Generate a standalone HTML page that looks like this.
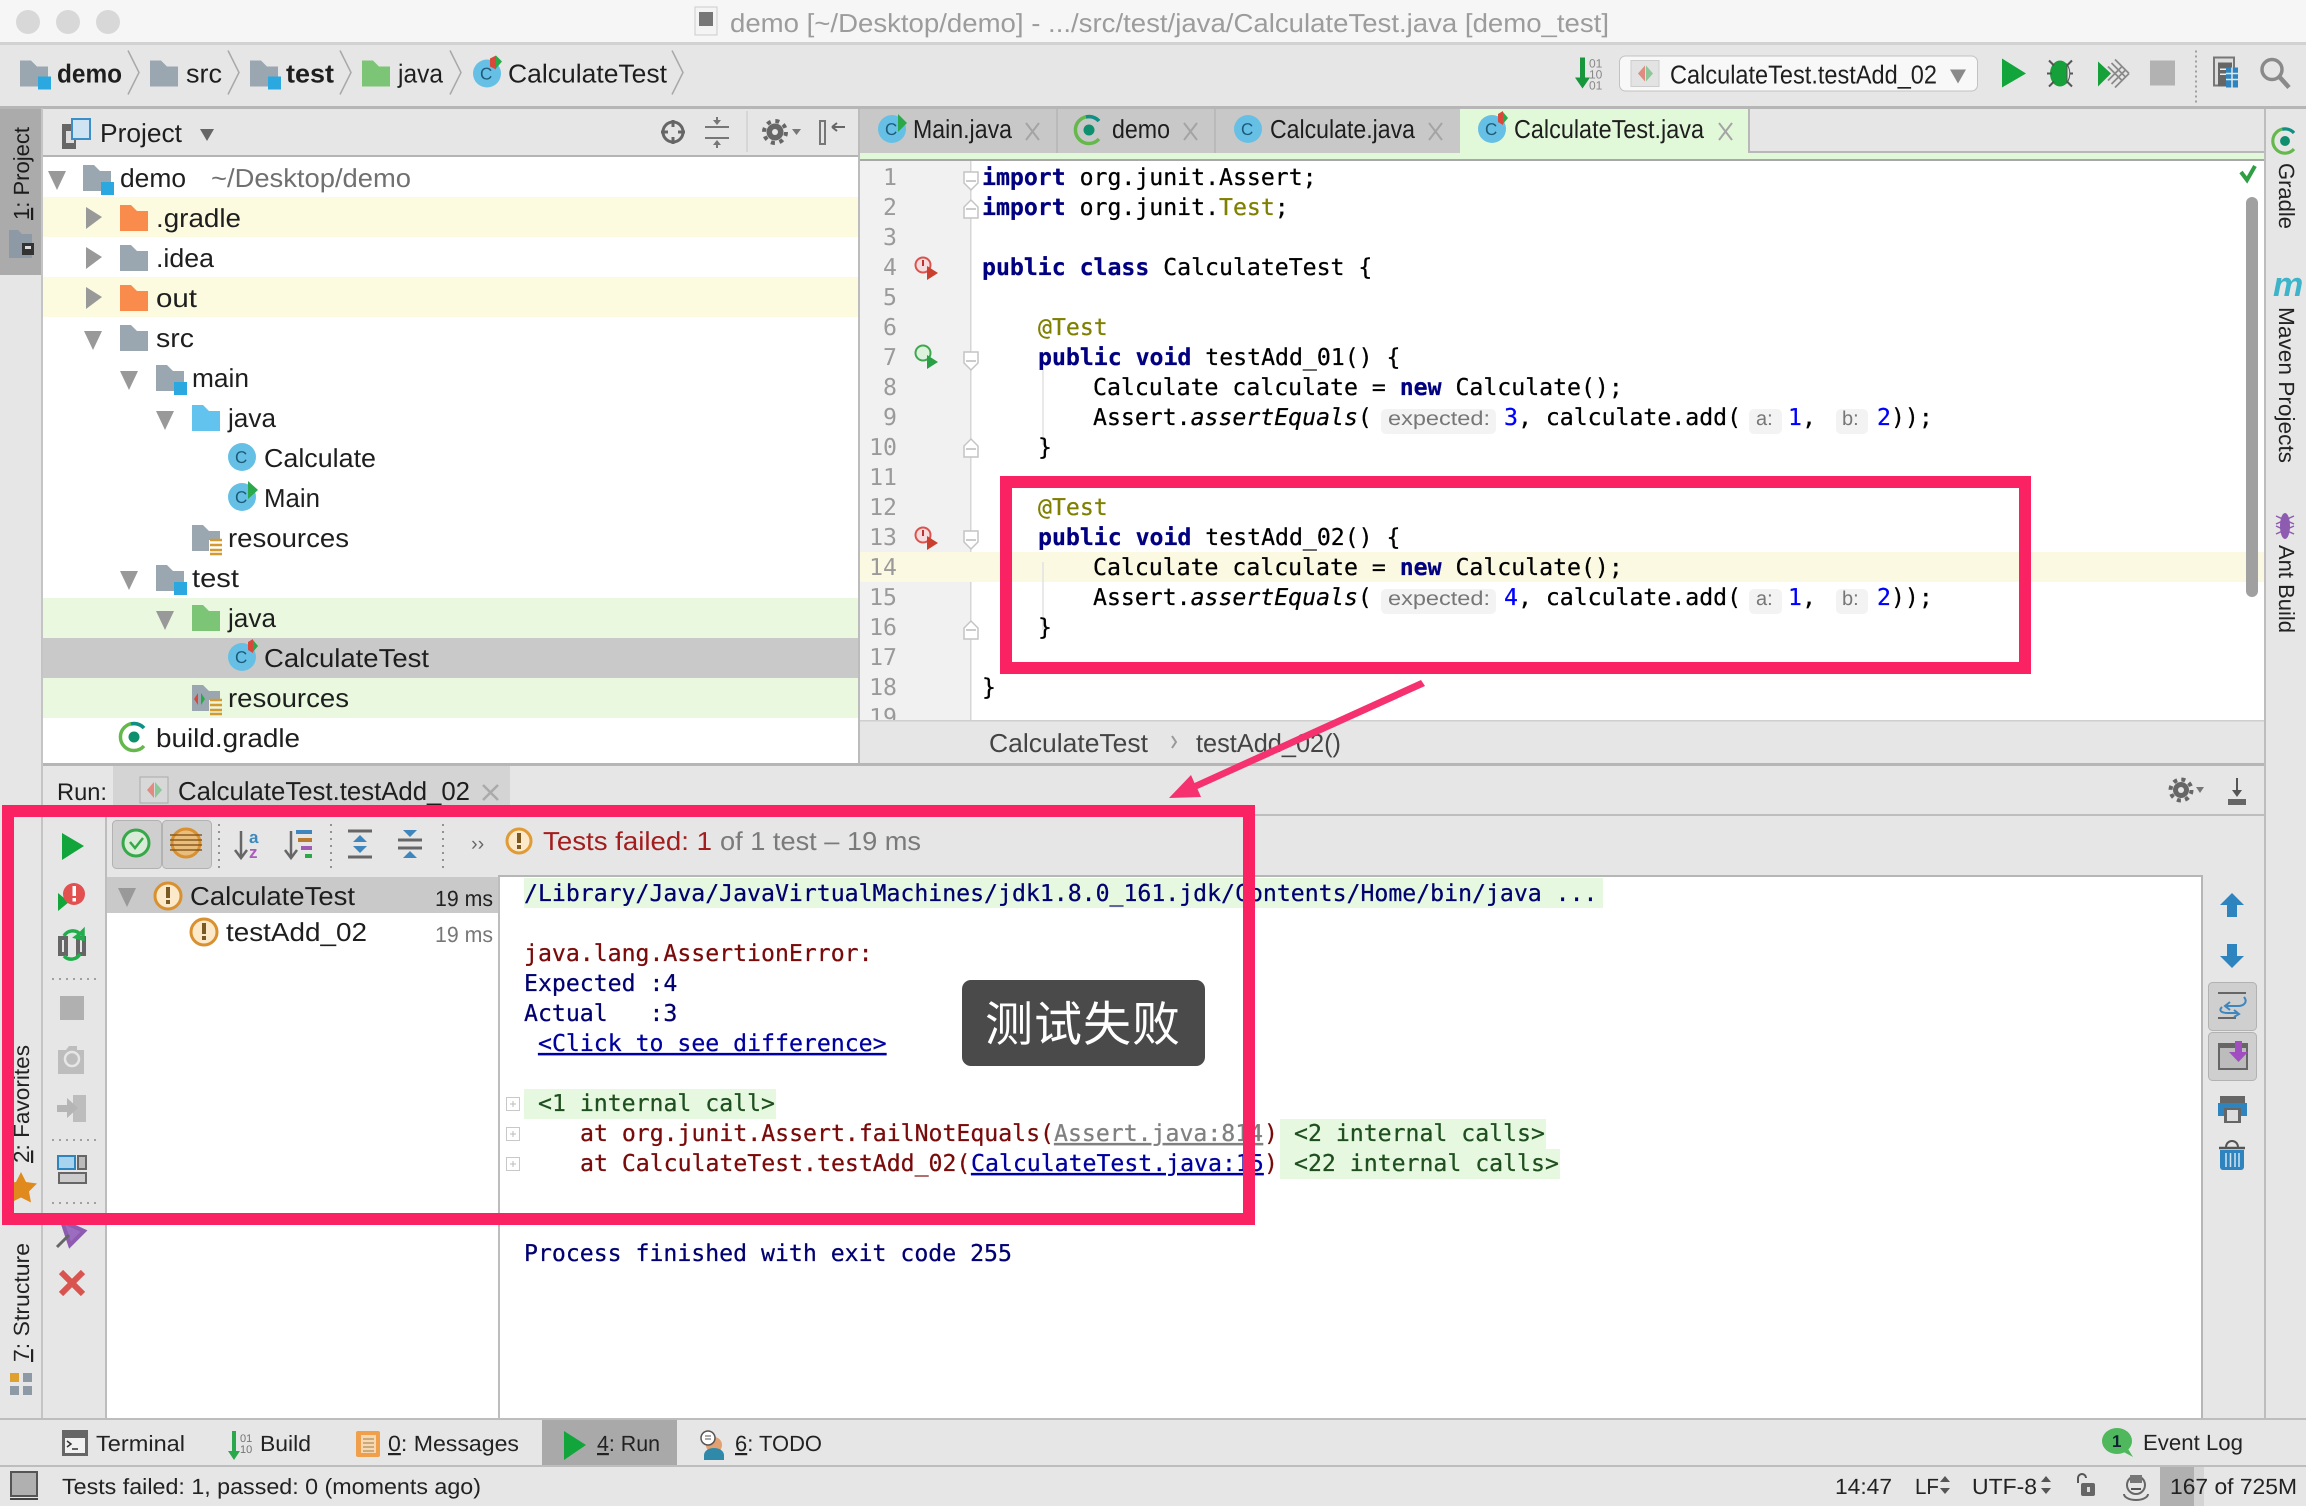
<!DOCTYPE html>
<html><head><meta charset="utf-8"><title>CalculateTest</title>
<style>
html,body{margin:0;padding:0;background:#e6e6e6;width:2306px;height:1506px;overflow:hidden}
svg{display:block;position:absolute;left:0;top:0}
text{font-family:"Liberation Sans","Noto Sans CJK SC",sans-serif;white-space:pre;text-rendering:geometricPrecision}
.u{font-size:26px;fill:#1e1e1e}
.m{font-family:"DejaVu Sans Mono","Liberation Mono",monospace;font-size:23.17px;fill:#000;stroke:#000;stroke-width:.25}
.k{font-weight:bold;fill:#000080;stroke:#000080}
.n{fill:#0000ff;stroke:#0000ff}
.a{fill:#808000;stroke:#808000}
.ln{font-family:"DejaVu Sans Mono","Liberation Mono",monospace;font-size:23.17px;fill:#9a9a9a;text-anchor:end}
.h{font-size:20px;fill:#777}
.red{fill:#7a0a0a;stroke:#7a0a0a}.nv{fill:#000070;stroke:#000070}.grn{fill:#1f4f1f;stroke:#1f4f1f}
.s{font-size:22px;fill:#222}
</style></head><body>
<svg width="2306" height="1506" viewBox="0 0 2306 1506" xmlns="http://www.w3.org/2000/svg">
<defs>
<path id="fo" d="M0 0H11L17 6H28V26H0Z"/>
<path id="fd" d="M0 0h14v11l-7 7-7-7z" fill="#fff" stroke="#c4c4c4" stroke-width="1.5"/>
<path id="fu" d="M7 0l7 7v11H0V7z" fill="#fff" stroke="#c4c4c4" stroke-width="1.5"/>
<path id="arr-d" d="M0 0H18L9 19Z" fill="#999"/>
<path id="arr-r" d="M0 0L16 10L0 22Z" fill="#999"/>
<g id="gr"><path d="M10-9A13.500 13.500 0 1 0 10 9" fill="none" stroke="#64b84c" stroke-width="3.500"/><path d="M10-9A13.500 13.500 0 0 0-3-13" fill="none" stroke="#0e8f88" stroke-width="3.500"/><circle r="5.500" fill="#0e8f6e"/></g>
</defs>

<!-- title bar -->
<rect width="2306" height="1506" fill="#e6e6e6"/>
<rect width="2306" height="42" fill="#f6f6f6"/>
<rect y="42" width="2306" height="3" fill="#d2d2d2"/>
<circle cx="28" cy="22" r="12" fill="#d8d8d8"/><circle cx="68" cy="22" r="12" fill="#d8d8d8"/><circle cx="108" cy="22" r="12" fill="#d8d8d8"/>
<rect x="695" y="7" width="22" height="28" fill="#f4f4f4" stroke="#ccc"/><rect x="699" y="12" width="14" height="14" fill="#777"/>
<text x="730" y="32" class="u" style="fill:#9c9c9c" font-size="26" textLength="879" lengthAdjust="spacingAndGlyphs">demo [~/Desktop/demo] - .../src/test/java/CalculateTest.java [demo_test]</text>

<!-- nav bar -->
<rect y="106" width="2306" height="3" fill="#b6b6b6"/>
<g transform="translate(0,-1.500)">
<use href="#fo" x="20" y="62" fill="#9aa7b0"/><rect x="38" y="78" width="13" height="13" fill="#2aa8df"/>
<text x="57" y="84" class="u" font-weight="bold" textLength="65" lengthAdjust="spacingAndGlyphs">demo</text>
<path d="M128 52L139 74L128 96" fill="none" stroke="#a8a8a8" stroke-width="1.5"/>
<use href="#fo" x="150" y="62" fill="#9aa7b0"/>
<text x="186" y="84" class="u" textLength="36" lengthAdjust="spacingAndGlyphs">src</text>
<path d="M228 52L239 74L228 96" fill="none" stroke="#a8a8a8" stroke-width="1.5"/>
<use href="#fo" x="250" y="62" fill="#9aa7b0"/><rect x="268" y="78" width="13" height="13" fill="#2aa8df"/>
<text x="286" y="84" class="u" font-weight="bold" textLength="48" lengthAdjust="spacingAndGlyphs">test</text>
<path d="M340 52L351 74L340 96" fill="none" stroke="#a8a8a8" stroke-width="1.5"/>
<use href="#fo" x="362" y="62" fill="#7cc576"/>
<text x="398" y="84" class="u" textLength="45" lengthAdjust="spacingAndGlyphs">java</text>
<path d="M450 52L461 74L450 96" fill="none" stroke="#a8a8a8" stroke-width="1.5"/>
<circle cx="487" cy="75" r="14" fill="#66c0e6"/><text x="480" y="81" font-size="17" fill="#1d5a78">C</text>
<path d="M490 60l6-3v14l-6-3z" fill="#d9483b"/><path d="M496 57l6 6-6 7z" fill="#2aa84a"/>
<text x="508" y="84" class="u" textLength="159" lengthAdjust="spacingAndGlyphs">CalculateTest</text>
<path d="M672 52L683 74L672 96" fill="none" stroke="#a8a8a8" stroke-width="1.5"/>

<!-- run config toolbar -->
<path d="M1580 59h5v20h5l-7.500 11-7.500-11h5z" fill="#17963c"/>
<text x="1589" y="69" font-size="12" fill="#888">01</text><text x="1589" y="80" font-size="12" fill="#888">10</text><text x="1589" y="91" font-size="12" fill="#888">01</text>
<rect x="1619.500" y="57.500" width="358" height="35" rx="6" fill="#f8f8f8" stroke="#c2c2c2"/>
<rect x="1631" y="62" width="28" height="26" fill="#e3e3e3" stroke="#ccc"/><path d="M1645 67v16l-7-8z" fill="#e08a80"/><path d="M1646 67v16l7-8z" fill="#8cc79a"/>
<text x="1670" y="85" class="u" textLength="267" lengthAdjust="spacingAndGlyphs">CalculateTest.testAdd_02</text>
<path d="M1950 71h16l-8 14z" fill="#8a8a8a"/>
<path d="M2002 60L2026 75L2002 89Z" fill="#12a53b"/>
<ellipse cx="2060" cy="75" rx="10" ry="13" fill="#16a03a"/><path d="M2049 62l5 5M2072 62l-5 5M2047 75h5M2073 75h-5M2049 88l5-5M2072 88l-5-5" stroke="#555" stroke-width="2"/><path d="M2067 66a10 13 0 0 1 0 18z" fill="#e6e6e6" stroke="#555" stroke-width="1"/>
<path d="M2098 63l13 12-13 13z" fill="#16a03a"/><path d="M2108 68l14 14M2111.500 64.500l14 14M2115 61l14 14M2108 82l14-14M2111.500 85.500l14-14M2115 89l14-14" stroke="#8a8a8a" stroke-width="1.800"/>
<rect x="2150" y="62" width="25" height="25" fill="#b2b2b2"/>
<path d="M2196 52V104" stroke="#888" stroke-width="1.500" stroke-dasharray="2 3"/>
<rect x="2214" y="59" width="20" height="28" fill="#ddd" stroke="#777" stroke-width="2"/><rect x="2218" y="64" width="14" height="24" fill="#666"/><rect x="2220" y="70" width="8" height="1.500" fill="#eee"/><rect x="2220" y="75" width="8" height="1.500" fill="#eee"/>
<rect x="2226" y="69" width="12" height="20" fill="#2e84bf" /><path d="M2226 75h12M2226 81h12M2232 69v20" stroke="#e6e6e6" stroke-width="1.500"/>
<circle cx="2272" cy="71" r="10" fill="none" stroke="#8a8a8a" stroke-width="3.500"/><path d="M2280 79l9 10" stroke="#8a8a8a" stroke-width="4.500"/>
</g>

<!-- left stripe -->
<rect x="41" y="108" width="2" height="1310" fill="#c4c4c4"/>
<rect x="0" y="109" width="41" height="166" fill="#ababab"/>
<g transform="translate(29,220) rotate(-90)"><text class="s" textLength="93" lengthAdjust="spacingAndGlyphs" style="fill:#1c1c1c"><tspan text-decoration="underline">1</tspan>: Project</text></g>
<path d="M9 230H18L22 234H32V258H9Z" fill="#8d9aa5"/><rect x="22" y="243" width="12" height="12" fill="#333"/><rect x="25" y="246" width="6" height="3" fill="#ddd"/>
<g transform="translate(29,1163) rotate(-90)"><text class="s" textLength="118" lengthAdjust="spacingAndGlyphs"><tspan text-decoration="underline">2</tspan>: Favorites</text></g>
<path d="M21 1172l5 10 11 1.500-8 8 2 11-10-5-10 5 2-11-8-8 11-1.500z" fill="#e08a1e"/>
<g transform="translate(29,1362) rotate(-90)"><text class="s" textLength="119" lengthAdjust="spacingAndGlyphs"><tspan text-decoration="underline">7</tspan>: Structure</text></g>
<rect x="10" y="1373" width="9" height="9" fill="#e0a030"/><rect x="23" y="1373" width="9" height="9" fill="#8d9aa5"/><rect x="10" y="1386" width="9" height="9" fill="#8d9aa5"/><rect x="23" y="1386" width="9" height="9" fill="#8d9aa5"/>

<!-- project panel -->
<rect x="43" y="109" width="815" height="47" fill="#e6e6e6"/>
<rect x="43" y="155" width="815" height="2" fill="#b4b4b4"/>
<rect x="43" y="157" width="815" height="606" fill="#fff"/>
<rect x="858" y="109" width="2" height="656" fill="#bcbcbc"/>
<g transform="translate(0,-1)">
<rect x="62" y="125" width="14" height="25" fill="#666"/><rect x="66" y="132" width="8" height="12" fill="#ddd"/><rect x="72" y="120" width="18" height="20" fill="#cfe4f3" stroke="#3b8ec7" stroke-width="2"/>
<text x="100" y="143" class="u" textLength="82" lengthAdjust="spacingAndGlyphs">Project</text>
<path d="M200 130h14l-7 12z" fill="#666"/>
<circle cx="673" cy="133" r="10" fill="none" stroke="#666" stroke-width="3"/><path d="M673 121v7M673 138v7M661 133h7M678 133h7" stroke="#666" stroke-width="3"/>
<path d="M705 128h24M705 139h24M717 118v7M717 142v7" stroke="#777" stroke-width="2"/><path d="M713 121l4 5 4-5zM713 146l4-5 4 5z" fill="#777"/>
<path d="M747 112V153" stroke="#d0d0d0" stroke-width="1.500"/>
<circle cx="775" cy="133" r="8.500" fill="#666"/><circle cx="775" cy="133" r="11" fill="none" stroke="#666" stroke-width="4" stroke-dasharray="4 4.640"/><circle cx="775" cy="133" r="3" fill="#e6e6e6"/><path d="M792 130h9l-4.500 6z" fill="#777"/>
<rect x="820" y="122" width="5" height="23" fill="none" stroke="#777" stroke-width="2"/><path d="M845 128h-13M832 128l5-4M832 128l5 4" stroke="#666" stroke-width="2" fill="none"/>
</g>

<!-- tree rows -->
<rect x="43" y="197" width="815" height="40" fill="#fcfbdf"/>
<rect x="43" y="277" width="815" height="40" fill="#fcfbdf"/>
<rect x="43" y="598" width="815" height="40" fill="#e9f8df"/>
<rect x="43" y="638" width="815" height="40" fill="#c9c9c9"/>
<rect x="43" y="678" width="815" height="40" fill="#e9f8df"/>

<g transform="translate(0,-1)">
<use href="#arr-d" x="48" y="172"/><use href="#fo" x="83" y="166" fill="#9aa7b0"/><rect x="101" y="183" width="13" height="13" fill="#2aa8df"/>
<text x="120" y="188" class="u" textLength="66" lengthAdjust="spacingAndGlyphs">demo</text>
<text x="211" y="188" class="u" style="fill:#707070" textLength="200" lengthAdjust="spacingAndGlyphs">~/Desktop/demo</text>

<use href="#arr-r" x="86" y="208"/><use href="#fo" x="120" y="206" fill="#f98b4d"/>
<text x="156" y="228" class="u" textLength="85" lengthAdjust="spacingAndGlyphs">.gradle</text>
<use href="#arr-r" x="86" y="248"/><use href="#fo" x="120" y="246" fill="#9aa7b0"/>
<text x="156" y="268" class="u" textLength="58" lengthAdjust="spacingAndGlyphs">.idea</text>
<use href="#arr-r" x="86" y="288"/><use href="#fo" x="120" y="286" fill="#f98b4d"/>
<text x="156" y="308" class="u" textLength="41" lengthAdjust="spacingAndGlyphs">out</text>
<use href="#arr-d" x="84" y="332"/><use href="#fo" x="120" y="326" fill="#9aa7b0"/>
<text x="156" y="348" class="u" textLength="38" lengthAdjust="spacingAndGlyphs">src</text>
<use href="#arr-d" x="120" y="372"/><use href="#fo" x="156" y="366" fill="#9aa7b0"/><rect x="174" y="383" width="13" height="13" fill="#2aa8df"/>
<text x="192" y="388" class="u" textLength="57" lengthAdjust="spacingAndGlyphs">main</text>
<use href="#arr-d" x="156" y="412"/><use href="#fo" x="192" y="406" fill="#62c4ee"/>
<text x="228" y="428" class="u" textLength="48" lengthAdjust="spacingAndGlyphs">java</text>

<circle cx="242" cy="458" r="14" fill="#66c0e6"/><text x="235" y="464" font-size="17" fill="#1d5a78">C</text>
<text x="264" y="468" class="u" textLength="112" lengthAdjust="spacingAndGlyphs">Calculate</text>
<circle cx="242" cy="498" r="14" fill="#66c0e6"/><text x="235" y="504" font-size="17" fill="#1d5a78">C</text><path d="M248 482l10 9-10 9z" fill="#2aa84a"/>
<text x="264" y="508" class="u" textLength="56" lengthAdjust="spacingAndGlyphs">Main</text>

<use href="#fo" x="192" y="526" fill="#9aa7b0"/><path d="M209 541h13v14h-13z" fill="#fff"/><path d="M210 541h12M210 546h12M210 551h12M210 555h12" stroke="#d49a30" stroke-width="2.500"/>
<text x="228" y="548" class="u" textLength="121" lengthAdjust="spacingAndGlyphs">resources</text>

<use href="#arr-d" x="120" y="572"/><use href="#fo" x="156" y="566" fill="#9aa7b0"/><rect x="174" y="583" width="13" height="13" fill="#2aa8df"/>
<text x="192" y="588" class="u" textLength="47" lengthAdjust="spacingAndGlyphs">test</text>
<use href="#arr-d" x="156" y="612"/><use href="#fo" x="192" y="606" fill="#7cc576"/>
<text x="228" y="628" class="u" textLength="48" lengthAdjust="spacingAndGlyphs">java</text>
<circle cx="242" cy="658" r="14" fill="#66c0e6"/><text x="235" y="664" font-size="17" fill="#1d5a78">C</text><path d="M248 643l5-3v14l-5-3z" fill="#d9483b"/><path d="M253 641l5 6-5 6z" fill="#2aa84a"/>
<text x="264" y="668" class="u" textLength="165" lengthAdjust="spacingAndGlyphs">CalculateTest</text>
<use href="#fo" x="192" y="686" fill="#9aa7b0"/><path d="M198 694l-4 6 4 6z" fill="#d9483b"/><path d="M201 694l4 6-4 6z" fill="#2aa84a"/><path d="M209 701h13v14h-13z" fill="#e9f8df"/><path d="M210 701h12M210 706h12M210 711h12M210 715h12" stroke="#d49a30" stroke-width="2.500"/>
<text x="228" y="708" class="u" textLength="121" lengthAdjust="spacingAndGlyphs">resources</text>
<use href="#gr" x="134" y="738"/>
<text x="156" y="748" class="u" textLength="144" lengthAdjust="spacingAndGlyphs">build.gradle</text>
</g>

<!-- tabs -->
<rect x="860" y="109" width="1406" height="44" fill="#e6e6e6"/>
<rect x="860" y="109" width="600" height="44" fill="#c8c8c8"/>
<path d="M1057 109v44M1215 109v44" stroke="#b6b6b6" stroke-width="1.500"/>
<rect x="1460" y="109" width="288" height="44" fill="#e1f9d8"/>
<rect x="1748" y="109" width="2" height="43" fill="#b8b8b8"/>
<rect x="1748" y="151" width="518" height="2" fill="#b8b8b8"/>
<rect x="860" y="153" width="1406" height="6" fill="#e1f9d8"/>
<rect x="860" y="159" width="1406" height="2" fill="#a8a8a8"/>
<circle cx="892" cy="129" r="14" fill="#66c0e6"/><text x="885" y="135" font-size="17" fill="#1d5a78">C</text><path d="M898 114l9 9-9 9z" fill="#2aa84a"/>
<text x="913" y="138" class="u" textLength="99" lengthAdjust="spacingAndGlyphs">Main.java</text>
<path d="M1026 123l13 17M1039 123l-13 17" stroke="#a4a4a4" stroke-width="2"/>
<use href="#gr" x="1089" y="130"/>
<text x="1112" y="138" class="u" textLength="58" lengthAdjust="spacingAndGlyphs">demo</text>
<path d="M1184 123l13 17M1197 123l-13 17" stroke="#a4a4a4" stroke-width="2"/>
<circle cx="1248" cy="129" r="14" fill="#66c0e6"/><text x="1241" y="135" font-size="17" fill="#1d5a78">C</text>
<text x="1270" y="138" class="u" textLength="145" lengthAdjust="spacingAndGlyphs">Calculate.java</text>
<path d="M1429 123l13 17M1442 123l-13 17" stroke="#a4a4a4" stroke-width="2"/>
<circle cx="1492" cy="129" r="14" fill="#66c0e6"/><text x="1485" y="135" font-size="17" fill="#1d5a78">C</text><path d="M1498 114l5-3v14l-5-3z" fill="#d9483b"/><path d="M1503 112l5 6-5 6z" fill="#2aa84a"/>
<text x="1514" y="138" class="u" textLength="190" lengthAdjust="spacingAndGlyphs">CalculateTest.java</text>
<path d="M1719 123l13 17M1732 123l-13 17" stroke="#a4a4a4" stroke-width="2"/>

<!-- editor -->
<rect x="860" y="161" width="110" height="560" fill="#f1f1f1"/>
<rect x="970" y="161" width="1296" height="560" fill="#fff"/>
<rect x="970" y="161" width="1.500" height="560" fill="#d6d6d6"/>
<rect x="860" y="552" width="1405" height="30" fill="#fcf9e3"/>
<path d="M1043 370V445M1043 562V630" stroke="#e2e2e2" stroke-width="1.500"/>

<g transform="translate(0,-1)">
<text class="ln" x="897" y="186">1</text><text class="ln" x="897" y="216">2</text><text class="ln" x="897" y="246">3</text><text class="ln" x="897" y="276">4</text><text class="ln" x="897" y="306">5</text><text class="ln" x="897" y="336">6</text><text class="ln" x="897" y="366">7</text><text class="ln" x="897" y="396">8</text><text class="ln" x="897" y="426">9</text><text class="ln" x="897" y="456">10</text><text class="ln" x="897" y="486">11</text><text class="ln" x="897" y="516">12</text><text class="ln" x="897" y="546">13</text><text class="ln" x="897" y="576">14</text><text class="ln" x="897" y="606">15</text><text class="ln" x="897" y="636">16</text><text class="ln" x="897" y="666">17</text><text class="ln" x="897" y="696">18</text><text class="ln" x="897" y="726">19</text>
</g>

<use href="#fd" x="964" y="172"/><use href="#fu" x="964" y="200"/><use href="#fd" x="964" y="352"/><use href="#fu" x="964" y="439"/><use href="#fd" x="964" y="531"/><use href="#fu" x="964" y="621"/>
<path d="M966 181h10M966 209h10M966 361h10M966 449h10M966 540h10M966 630h10" stroke="#bbb" stroke-width="1.500"/>

<!-- gutter icons -->
<circle cx="923" cy="265" r="7.500" fill="#f6dcdc" stroke="#d9534f" stroke-width="2"/><path d="M923 260v6" stroke="#b33" stroke-width="2"/><path d="M927 266l11 7-11 7z" fill="#c9402f"/>
<circle cx="923" cy="353" r="7.500" fill="#dcf2dc" stroke="#3fa84f" stroke-width="2"/><path d="M927 355l11 7-11 7z" fill="#29a045"/>
<circle cx="923" cy="535" r="7.500" fill="#f6dcdc" stroke="#d9534f" stroke-width="2"/><path d="M923 530v6" stroke="#b33" stroke-width="2"/><path d="M927 536l11 7-11 7z" fill="#c9402f"/>

<!-- code -->
<g transform="translate(0,-1)">
<text class="m" x="982" y="186"><tspan class="k">import</tspan> org.junit.Assert;</text>
<text class="m" x="982" y="216"><tspan class="k">import</tspan> org.junit.<tspan class="a">Test</tspan>;</text>
<text class="m" x="982" y="276"><tspan class="k">public class</tspan> CalculateTest {</text>
<text class="m" x="1038" y="336"><tspan class="a">@Test</tspan></text>
<text class="m" x="1038" y="366"><tspan class="k">public void</tspan> testAdd_01() {</text>
<text class="m" x="1093" y="396">Calculate calculate = <tspan class="k">new</tspan> Calculate();</text>
<text class="m" x="1093" y="426">Assert.<tspan font-style="italic">assertEquals</tspan>(</text>
<rect x="1381" y="410" width="115" height="25" rx="5" fill="#f3f3f3"/><text class="h" x="1388" y="426" textLength="102" lengthAdjust="spacingAndGlyphs">expected:</text>
<text class="m" x="1504" y="426"><tspan class="n">3</tspan>, calculate.add(</text>
<rect x="1749" y="410" width="33" height="25" rx="5" fill="#f3f3f3"/><text class="h" x="1756" y="426">a:</text>
<text class="m" x="1788" y="426"><tspan class="n">1</tspan>,</text>
<rect x="1836" y="410" width="32" height="25" rx="5" fill="#f3f3f3"/><text class="h" x="1842" y="426">b:</text>
<text class="m" x="1877" y="426"><tspan class="n">2</tspan>));</text>
<text class="m" x="1038" y="456">}</text>

<text class="m" x="1038" y="516"><tspan class="a">@Test</tspan></text>
<text class="m" x="1038" y="546"><tspan class="k">public void</tspan> testAdd_02() {</text>
<text class="m" x="1093" y="576">Calculate calculate = <tspan class="k">new</tspan> Calculate();</text>
<text class="m" x="1093" y="606">Assert.<tspan font-style="italic">assertEquals</tspan>(</text>
<rect x="1381" y="590" width="115" height="25" rx="5" fill="#f3f3f3"/><text class="h" x="1388" y="606" textLength="102" lengthAdjust="spacingAndGlyphs">expected:</text>
<text class="m" x="1504" y="606"><tspan class="n">4</tspan>, calculate.add(</text>
<rect x="1749" y="590" width="33" height="25" rx="5" fill="#f3f3f3"/><text class="h" x="1756" y="606">a:</text>
<text class="m" x="1788" y="606"><tspan class="n">1</tspan>,</text>
<rect x="1836" y="590" width="32" height="25" rx="5" fill="#f3f3f3"/><text class="h" x="1842" y="606">b:</text>
<text class="m" x="1877" y="606"><tspan class="n">2</tspan>));</text>
<text class="m" x="1038" y="636">}</text>
<text class="m" x="982" y="696">}</text>
</g>

<!-- scrollbar & check -->
<rect x="2246" y="197" width="12" height="400" rx="6" fill="#a0a0a0"/>
<path d="M2241 172l6 8 8-14" fill="none" stroke="#2f9e44" stroke-width="4"/>

<!-- right stripe -->
<rect x="2264" y="109" width="2" height="1309" fill="#bdbdbd"/>
<use href="#gr" transform="translate(2285,141) scale(.9)"/>
<g transform="translate(2279,163) rotate(90)"><text class="s" textLength="66" lengthAdjust="spacingAndGlyphs">Gradle</text></g>
<text x="2273" y="296" font-size="34" font-style="italic" font-weight="bold" fill="#3db4c9" font-family="Liberation Serif">m</text>
<g transform="translate(2279,307) rotate(90)"><text class="s" textLength="156" lengthAdjust="spacingAndGlyphs">Maven Projects</text></g>
<ellipse cx="2285" cy="526" rx="5" ry="13" fill="#8d5cb0"/><path d="M2276 516l18 8M2294 516l-18 8M2276 534l18-8M2294 534l-18-8" stroke="#8d5cb0" stroke-width="1.500"/>
<g transform="translate(2279,545) rotate(90)"><text class="s" textLength="88" lengthAdjust="spacingAndGlyphs">Ant Build</text></g>

<!-- editor breadcrumb -->
<rect x="860" y="721" width="1404" height="43" fill="#e6e6e6"/>
<rect x="860" y="720" width="1404" height="1.500" fill="#cfcfcf"/>
<text x="989" y="752" class="u" style="fill:#444" font-size="25" textLength="159" lengthAdjust="spacingAndGlyphs">CalculateTest</text>
<path d="M1172 736l4 6-4 6" fill="none" stroke="#999" stroke-width="2"/>
<text x="1196" y="752" class="u" style="fill:#444" textLength="145" lengthAdjust="spacingAndGlyphs">testAdd_02()</text>

<!-- run panel header -->
<rect x="43" y="763" width="2221" height="3" fill="#b6b6b6"/>
<rect x="43" y="766" width="2221" height="652" fill="#e6e6e6"/>
<rect x="113" y="766" width="397" height="49" fill="#d4d4d4"/>
<rect x="43" y="814" width="2221" height="2" fill="#bdbdbd"/>
<text x="57" y="800" class="u" style="font-size:24px" textLength="50" lengthAdjust="spacingAndGlyphs">Run:</text>
<rect x="140" y="777" width="28" height="26" fill="#d8d8d8" stroke="#aaa"/><path d="M154 782v16l-7-8z" fill="#e08a80"/><path d="M155 782v16l7-8z" fill="#8cc79a"/>
<text x="178" y="800" class="u" textLength="292" lengthAdjust="spacingAndGlyphs">CalculateTest.testAdd_02</text>
<path d="M483 785l15 15M498 785l-15 15" stroke="#aaa" stroke-width="2.500"/>
<circle cx="2181" cy="790" r="8" fill="#666"/><circle cx="2181" cy="790" r="10.500" fill="none" stroke="#666" stroke-width="4" stroke-dasharray="4 4.250"/><circle cx="2181" cy="790" r="3" fill="#e6e6e6"/><path d="M2196 787h8l-4 6z" fill="#777"/>
<path d="M2237 778v16" stroke="#555" stroke-width="2"/><path d="M2232 790l5 7 5-7z" fill="#555"/><path d="M2228 799h18v6h-18z" fill="#666"/>

<!-- run left toolbar -->
<rect x="105" y="816" width="2" height="602" fill="#bdbdbd"/>
<path d="M62 833L84 846L62 860Z" fill="#12a53b"/>
<path d="M58 893l11 9-11 9z" fill="#12a53b"/><circle cx="74" cy="894" r="11" fill="#e25050"/><rect x="72.500" y="886" width="3.500" height="10" fill="#fff"/><rect x="72.500" y="898" width="3.500" height="3.500" fill="#fff"/>
<path d="M60 938h6v16h-6zM78 938h6v16h-6z" fill="none" stroke="#666" stroke-width="4"/><path d="M64 936a10 10 0 0 1 16-2l-4 3 7 2v-8l-3 3M80 954a10 10 0 0 1-16 2" fill="none" stroke="#1fae4a" stroke-width="3.500"/>
<path d="M52 979h46" stroke="#888" stroke-width="1.500" stroke-dasharray="2 5"/>
<rect x="60" y="996" width="24" height="24" fill="#b0b0b0"/>
<path d="M58 1050h8l3-4h8v4h7v24H58z" fill="#bdbdbd"/><circle cx="72" cy="1059" r="7" fill="none" stroke="#e6e6e6" stroke-width="2.500"/>
<rect x="73" y="1095" width="13" height="27" fill="#bdbdbd"/><path d="M57 1105h10v-7l11 10-11 10v-6H57z" fill="#b5b5b5"/>
<path d="M52 1140h46" stroke="#888" stroke-width="1.500" stroke-dasharray="2 5"/>
<rect x="58" y="1156" width="17" height="13" fill="#a7d3ee" stroke="#2e84bf" stroke-width="2"/><rect x="78" y="1156" width="8" height="13" fill="#bbb" stroke="#666" stroke-width="2"/><rect x="59" y="1173" width="27" height="10" fill="#ccc" stroke="#666" stroke-width="2"/>
<path d="M52 1203h46" stroke="#888" stroke-width="1.500" stroke-dasharray="2 5"/>
<path d="M62 1221l22 10-14 14z" stroke="#8d5cb0" stroke-width="4" fill="#9b6cc0"/><path d="M57 1247l12-12" stroke="#666" stroke-width="3"/>
<path d="M61 1272l22 22M83 1272l-22 22" stroke="#d9534f" stroke-width="6"/>

<!-- run toolbar -->
<rect x="112.500" y="820.500" width="49" height="48" rx="4" fill="#cfcfcf" stroke="#b2b2b2"/>
<rect x="162.500" y="820.500" width="49" height="48" rx="4" fill="#cfcfcf" stroke="#b2b2b2"/>
<circle cx="136" cy="843" r="13" fill="#d8ecd8" stroke="#37a84a" stroke-width="3"/><path d="M130 842l5 6 8-10" fill="none" stroke="#37a84a" stroke-width="2.500"/>
<circle cx="186" cy="843" r="14" fill="#e9bd7c" stroke="#d89030" stroke-width="3"/><path d="M170 835h32M170 840h32M170 845h32M170 850h32" stroke="#8a5a20" stroke-width="1.500"/>
<path d="M219 824v46M331 824v46M443 824v46" stroke="#777" stroke-width="1.500" stroke-dasharray="2 5"/>
<path d="M241 831v26" stroke="#666" stroke-width="2.500"/><path d="M235 850l6 8 6-8" fill="none" stroke="#666" stroke-width="2.500"/>
<text x="249" y="843" font-size="17" font-weight="bold" fill="#3d88bd">a</text><text x="249" y="858" font-size="17" font-weight="bold" fill="#a95cbb">z</text>
<path d="M291 831v26" stroke="#666" stroke-width="2.500"/><path d="M285 850l6 8 6-8" fill="none" stroke="#666" stroke-width="2.500"/>
<path d="M296 832h16" stroke="#3f86bd" stroke-width="4"/><path d="M298 840h14" stroke="#b97b30" stroke-width="4"/><path d="M301 848h11" stroke="#a05cb5" stroke-width="4"/><path d="M305 856h7" stroke="#2aa84a" stroke-width="4"/>
<path d="M348 831h24M348 857h24" stroke="#666" stroke-width="3"/><path d="M360 835l7 7h-14zM360 853l7-7h-14z" fill="#3f86bd"/>
<path d="M398 840h24M398 848h24" stroke="#666" stroke-width="3"/><path d="M403 830h14l-7 7zM403 858h14l-7-7z" fill="#3f86bd"/>
<text x="471" y="850" font-size="20" fill="#666">››</text>
<circle cx="519" cy="841" r="12" fill="#fce9c9" stroke="#e09a36" stroke-width="3"/><rect x="517" y="833" width="4" height="10" fill="#7a5a22"/><rect x="517" y="845" width="4" height="4" fill="#7a5a22"/>
<text x="543" y="850" font-size="26" fill="#a31d1d" textLength="169" lengthAdjust="spacingAndGlyphs">Tests failed: 1</text>
<text x="720" y="850" font-size="26" fill="#7a7a7a" textLength="201" lengthAdjust="spacingAndGlyphs">of 1 test – 19 ms</text>

<!-- test tree -->
<rect x="107" y="877" width="391" height="336" fill="#fff"/><rect x="107" y="1213" width="391" height="205" fill="#fff"/>
<rect x="107" y="877" width="391" height="36" fill="#c9c9c9"/>
<use href="#arr-d" x="118" y="888"/>
<circle cx="168" cy="896" r="13" fill="#fce9c9" stroke="#d89030" stroke-width="3"/><rect x="166" y="887" width="4" height="11" fill="#7a5a22"/><rect x="166" y="900" width="4" height="4" fill="#7a5a22"/>
<text x="190" y="905" class="u" textLength="165" lengthAdjust="spacingAndGlyphs">CalculateTest</text>
<text x="435" y="906" font-size="22" fill="#222" textLength="58" lengthAdjust="spacingAndGlyphs">19 ms</text>
<circle cx="204" cy="932" r="13" fill="#fce9c9" stroke="#d89030" stroke-width="3"/><rect x="202" y="923" width="4" height="11" fill="#7a5a22"/><rect x="202" y="936" width="4" height="4" fill="#7a5a22"/>
<text x="226" y="941" class="u" textLength="141" lengthAdjust="spacingAndGlyphs">testAdd_02</text>
<text x="435" y="942" font-size="22" fill="#777" textLength="58" lengthAdjust="spacingAndGlyphs">19 ms</text>

<!-- console -->
<rect x="498" y="877" width="2" height="541" fill="#bdbdbd"/>
<rect x="500" y="877" width="1701" height="541" fill="#fff"/>
<rect x="2201" y="877" width="2" height="541" fill="#b6b6b6"/>
<rect x="498" y="875" width="1705" height="2" fill="#b6b6b6"/>
<rect x="524" y="878" width="1079" height="30" fill="#e6f9e0"/>
<text class="m nv" x="524" y="901">/Library/Java/JavaVirtualMachines/jdk1.8.0_161.jdk/Contents/Home/bin/java ...</text>
<text class="m red" x="524" y="961">java.lang.AssertionError:</text>
<text class="m nv" x="524" y="991">Expected :4</text>
<text class="m nv" x="524" y="1021">Actual   :3</text>
<text class="m" x="538" y="1051" style="fill:#0000a0;stroke:#0000a0" text-decoration="underline">&lt;Click to see difference&gt;</text>
<rect x="524" y="1089" width="252" height="30" fill="#e6f9e0"/>
<text class="m grn" x="538" y="1111">&lt;1 internal call&gt;</text>
<text class="m red" x="580" y="1141">at org.junit.Assert.failNotEquals(</text>
<text class="m" x="1054" y="1141" style="fill:#808080;stroke:#808080" text-decoration="underline">Assert.java:814</text>
<text class="m red" x="1264" y="1141">)</text>
<rect x="1280" y="1119" width="266" height="30" fill="#e6f9e0"/>
<text class="m grn" x="1294" y="1141">&lt;2 internal calls&gt;</text>
<text class="m red" x="580" y="1171">at CalculateTest.testAdd_02(</text>
<text class="m" x="971" y="1171" style="fill:#0000a0;stroke:#0000a0" text-decoration="underline">CalculateTest.java:15</text>
<text class="m red" x="1264" y="1171">)</text>
<rect x="1280" y="1149" width="280" height="30" fill="#e6f9e0"/>
<text class="m grn" x="1294" y="1171">&lt;22 internal calls&gt;</text>
<text class="m nv" x="524" y="1261">Process finished with exit code 255</text>
<path d="M506.500 1097.500h13v13h-13zM506.500 1127.500h13v13h-13zM506.500 1157.500h13v13h-13z" fill="#fff" stroke="#c8c8c8"/>
<path d="M510 1104h6M513 1101v6M510 1134h6M513 1131v6M510 1164h6M513 1161v6" stroke="#bbb"/>

<!-- tooltip -->
<rect x="962" y="980" width="243" height="86" rx="9" fill="#4a4a4a"/>
<text x="985" y="1041" font-size="48" fill="#fff" textLength="195" style="font-family:'Noto Sans CJK SC',sans-serif">测试失败</text>

<!-- run right toolbar -->
<path d="M2232 893l12 12h-7v12h-10v-12h-7z" fill="#2e84bf"/>
<path d="M2227 944h10v12h7l-12 12-12-12h7z" fill="#2e84bf"/>
<rect x="2208.500" y="982.500" width="48" height="48" rx="4" fill="#cfcfcf" stroke="#b2b2b2"/>
<rect x="2208.500" y="1032.500" width="48" height="48" rx="4" fill="#cfcfcf" stroke="#b2b2b2"/>
<path d="M2218 993h28M2218 1018h18" stroke="#666" stroke-width="2"/><path d="M2244 997c4 5 0 9-6 9h-12M2230 1002l-5 4 5 4M2222 1007c-4 4 0 6 6 6h10M2234 1010l5 4-5 3" fill="none" stroke="#3f86bd" stroke-width="2"/>
<rect x="2219" y="1044" width="28" height="25" fill="#bcbcbc" stroke="#666" stroke-width="2"/><path d="M2219 1046h28" stroke="#666" stroke-width="4"/><path d="M2235 1041h7v11h6l-9.500 10-9.500-10h6z" fill="#a04ec0"/>
<path d="M2220 1096h25v7h-25z" fill="#666"/><rect x="2218" y="1103" width="29" height="13" fill="#2e84bf"/><rect x="2224" y="1108" width="17" height="15" fill="#666"/><rect x="2227" y="1110" width="11" height="11" fill="#ddd"/>
<path d="M2219 1148h26" stroke="#555" stroke-width="2.500"/><path d="M2226 1147a6 6 0 0 1 12 0" fill="none" stroke="#555" stroke-width="2"/><path d="M2220 1150h24v17a3 3 0 0 1-3 3h-18a3 3 0 0 1-3-3z" fill="#2e84bf"/><path d="M2226 1153v14M2230.500 1153v14M2235 1153v14M2239 1153v14" stroke="#cfe4f3" stroke-width="1.500"/>

<!-- bottom tool bar -->
<rect y="1418" width="2306" height="2" fill="#bdbdbd"/>
<rect y="1420" width="2306" height="45" fill="#e6e6e6"/>
<rect x="542" y="1420" width="135" height="45" fill="#a9a9a9"/>
<rect y="1465" width="2306" height="2" fill="#bdbdbd"/>
<rect x="62" y="1430" width="26" height="26" fill="#666"/><rect x="65" y="1438" width="20" height="15" fill="#f2f2f2"/><path d="M67 1441l4 3-4 3M72 1449h6" fill="none" stroke="#333" stroke-width="1.500"/>
<text x="96" y="1451" class="s" textLength="89" lengthAdjust="spacingAndGlyphs">Terminal</text>
<path d="M232 1431h4v20h4l-6 9-6-9h4z" fill="#2aa84a"/><text x="240" y="1442" font-size="11" fill="#777">01</text><text x="240" y="1453" font-size="11" fill="#777">10</text>
<text x="260" y="1451" class="s" textLength="51" lengthAdjust="spacingAndGlyphs">Build</text>
<rect x="356" y="1431" width="24" height="26" rx="2" fill="#f0a04b"/><rect x="361" y="1435" width="15" height="18" fill="#f6d9b4"/><path d="M363 1439h11M363 1443h11M363 1447h11M363 1451h11" stroke="#a07a40"/>
<text x="388" y="1451" class="s" textLength="131" lengthAdjust="spacingAndGlyphs"><tspan text-decoration="underline">0</tspan>: Messages</text>
<path d="M564 1431l22 14-22 15z" fill="#12a53b"/>
<text x="597" y="1451" class="s" textLength="63" lengthAdjust="spacingAndGlyphs"><tspan text-decoration="underline">4</tspan>: Run</text>
<circle cx="714" cy="1445" r="8" fill="#e3a070"/><path d="M704 1460v-5a10 7 0 0 1 20 0v5z" fill="#2e8aa8"/><circle cx="708" cy="1438" r="7" fill="#fff" stroke="#555" stroke-width="1.500"/><path d="M705 1436h6M705 1439h6" stroke="#555"/>
<text x="735" y="1451" class="s" textLength="87" lengthAdjust="spacingAndGlyphs"><tspan text-decoration="underline">6</tspan>: TODO</text>

<ellipse cx="2117" cy="1441" rx="15" ry="13" fill="#4fb85c"/><path d="M2120 1450l13 7-8-13z" fill="#4fb85c"/>
<text x="2112" y="1447" font-size="17" font-weight="bold" fill="#123">1</text>
<text x="2143" y="1450" class="s" textLength="100" lengthAdjust="spacingAndGlyphs">Event Log</text>

<!-- status bar -->
<rect y="1467" width="2306" height="39" fill="#e6e6e6"/>
<g transform="translate(0,-1)">
<rect x="11" y="1473" width="26" height="24" fill="#b0b0b0" stroke="#555" stroke-width="2"/><rect x="10" y="1499" width="28" height="2" fill="#444"/>
<text x="62" y="1495" class="s" textLength="419" lengthAdjust="spacingAndGlyphs">Tests failed: 1, passed: 0 (moments ago)</text>
</g>
<rect x="2160" y="1467" width="34" height="39" fill="#b0b0b0"/><rect x="2194" y="1467" width="10" height="39" fill="#d4d4d4"/>
<g transform="translate(0,-1)">
<text x="1835" y="1495" class="s" textLength="57" lengthAdjust="spacingAndGlyphs">14:47</text>
<text x="1915" y="1495" class="s" textLength="24" lengthAdjust="spacingAndGlyphs">LF</text><path d="M1940 1483l5-6 5 6zM1940 1489l5 6 5-6z" fill="#555"/>
<text x="1972" y="1495" class="s" textLength="65" lengthAdjust="spacingAndGlyphs">UTF-8</text><path d="M2041 1483l5-6 5 6zM2041 1489l5 6 5-6z" fill="#555"/>
<path d="M2078 1484v-5a4 4 0 0 1 8 0" fill="none" stroke="#555" stroke-width="2"/><rect x="2081" y="1484" width="14" height="13" rx="2" fill="#666"/><rect x="2087" y="1488" width="3" height="5" fill="#ddd"/>
<circle cx="2136" cy="1486" r="9" fill="none" stroke="#666" stroke-width="2"/><path d="M2124 1495a12 6 0 0 0 24 0" fill="none" stroke="#666" stroke-width="2"/><rect x="2130" y="1476" width="12" height="8" fill="#777"/><path d="M2131 1490h10" stroke="#555" stroke-width="2"/>
<text x="2170" y="1495" class="s" textLength="127" lengthAdjust="spacingAndGlyphs">167 of 725M</text>
</g>

<!-- annotations -->
<rect x="1006" y="482" width="1019" height="186" fill="none" stroke="#fb2264" stroke-width="12"/>
<rect x="8" y="811" width="1241" height="408" fill="none" stroke="#fb2264" stroke-width="12"/>
<polygon points="1421,680 1425,686 1197.500,789 1201,797 1169,798 1191,775 1194.500,783" fill="#f5316f"/>
</svg>
</body></html>
